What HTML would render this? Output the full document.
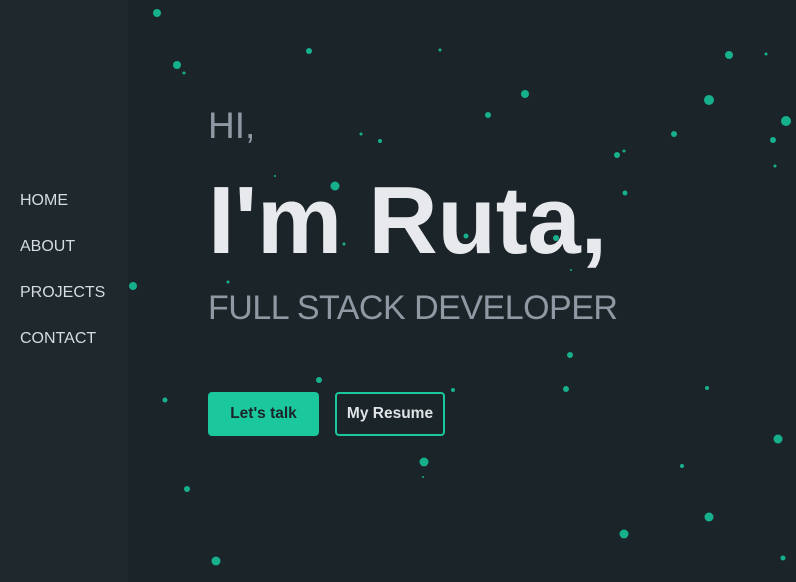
<!DOCTYPE html>
<html><head><meta charset="utf-8"><style>
*{margin:0;padding:0;box-sizing:border-box}
body{width:796px;height:582px;background:#1b2429;font-family:"Liberation Sans",sans-serif;position:relative;overflow:hidden}
.side{position:absolute;left:0;top:0;width:128px;height:582px;background:#1e282d}
.nav{position:absolute;left:20px;color:#d6dce0;font-size:16px}
.t{position:absolute;left:208px;white-space:nowrap}
.b{position:absolute;top:392px;height:44px;border-radius:4px;font-weight:bold;font-size:15.5px;display:flex;align-items:center;justify-content:center}
svg{position:absolute;left:0;top:0}
</style></head><body>
<div class="side"></div>
<svg width="796" height="582" fill="#17b08c">
<circle cx="157" cy="13" r="4"/><circle cx="177" cy="65" r="4"/><circle cx="184" cy="73" r="1.5"/><circle cx="309" cy="51" r="3"/><circle cx="440" cy="50" r="1.5"/><circle cx="729" cy="55" r="4"/><circle cx="766" cy="54" r="1.5"/><circle cx="709" cy="100" r="5"/><circle cx="525" cy="94" r="4"/><circle cx="488" cy="115" r="3"/><circle cx="786" cy="121" r="5"/><circle cx="674" cy="134" r="3"/><circle cx="773" cy="140" r="3"/><circle cx="617" cy="155" r="3"/><circle cx="624" cy="151" r="1.5"/><circle cx="775" cy="166" r="1.5"/><circle cx="380" cy="141" r="2"/><circle cx="361" cy="134" r="1.5"/><circle cx="335" cy="186" r="4.5"/><circle cx="275" cy="176" r="1"/><circle cx="625" cy="193" r="2.5"/><circle cx="466" cy="236" r="2.5"/><circle cx="344" cy="244" r="1.5"/><circle cx="228" cy="282" r="1.5"/><circle cx="133" cy="286" r="4"/><circle cx="571" cy="270" r="1"/><circle cx="570" cy="355" r="3"/><circle cx="319" cy="380" r="3"/><circle cx="453" cy="390" r="2"/><circle cx="566" cy="389" r="3"/><circle cx="707" cy="388" r="2"/><circle cx="165" cy="400" r="2.5"/><circle cx="778" cy="439" r="4.5"/><circle cx="424" cy="462" r="4.5"/><circle cx="423" cy="477" r="1"/><circle cx="682" cy="466" r="2"/><circle cx="187" cy="489" r="3"/><circle cx="709" cy="517" r="4.5"/><circle cx="624" cy="534" r="4.5"/><circle cx="216" cy="561" r="4.5"/><circle cx="783" cy="558" r="2.5"/><circle cx="556" cy="238" r="3"/>
</svg>
<div class="nav" style="top:192px">HOME</div>
<div class="nav" style="top:238px">ABOUT</div>
<div class="nav" style="top:284px">PROJECTS</div>
<div class="nav" style="top:330px">CONTACT</div>
<div class="t" style="top:105px;font-size:37px;color:#8e99a4">HI,</div>
<div class="t" style="top:166px;font-size:96px;font-weight:bold;color:#e8e9ec;letter-spacing:-0.3px">I'm Ruta,</div>
<div class="t" style="top:289px;font-size:34px;color:#8e99a4;letter-spacing:-0.5px">FULL STACK DEVELOPER</div>
<div class="b" style="left:208px;width:111px;background:#1bc89d;color:#1b2429">Let's talk</div>
<div class="b" style="left:335px;width:110px;border:2px solid #1bc89d;color:#e0e3e6">My Resume</div>
</body></html>
